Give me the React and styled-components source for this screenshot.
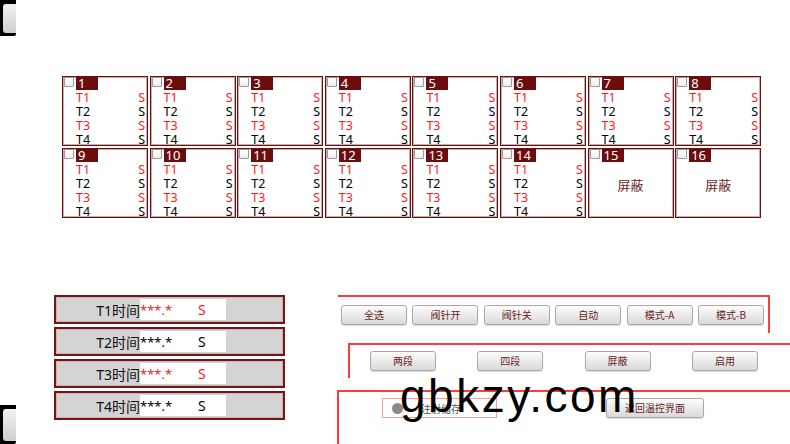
import React from 'react';
import styled, { createGlobalStyle } from 'styled-components';

const Global = createGlobalStyle`
  html, body { margin: 0; padding: 0; background: #fff; }
  body { font-family: "Noto Sans", "Noto Sans CJK SC", sans-serif; }
`;

const Page = styled.div`
  position: relative;
  width: 790px;
  height: 444px;
  overflow: hidden;
  background: #fff;
  display: flex;
  flex-direction: column;
`;

const Corner = styled.div`
  position: absolute;
  left: 0;
  top: ${(p) => p.$top}px;
  width: 16px;
  height: ${(p) => p.$h}px;
  background: #000;
  border-radius: 0 0 2px 0;
  &::after {
    content: '';
    position: absolute;
    left: 3px;
    top: 4px;
    right: 0;
    bottom: 3px;
    border-radius: 3px 0 0 3px;
    background: linear-gradient(#f2f2f2, #cfcfcf);
  }
`;

const Grid = styled.div`
  margin: 76px 0 0 62px;
  display: grid;
  grid-template-columns: repeat(8, 86px);
  grid-auto-rows: 70px;
  column-gap: 1.6px;
  row-gap: 2px;
`;

const Cell = styled.div`
  box-sizing: border-box;
  border: 1px solid #6a0e0e;
  box-shadow: inset 0 0 0 1px #d2aaaa;
  display: flex;
  flex-direction: column;
  padding: 0 1px 0 1px;
  font-size: 12.5px;
`;

const Head = styled.div`
  height: 13px;
  flex: none;
  display: flex;
  align-items: flex-start;
  gap: 2px;
`;

const Check = styled.span`
  box-sizing: border-box;
  width: 10px;
  height: 10px;
  border: 1px solid #9a9a9a;
  background: linear-gradient(#fff, #ececec);
  border-radius: 1px;
`;

const Tag = styled.span`
  box-sizing: border-box;
  width: 22px;
  height: 14px;
  margin-top: -1px;
  background: #6b0d0d;
  color: #fff;
  font-size: 13px;
  line-height: 15px;
  padding-left: 2px;
`;

const Row = styled.div`
  height: 14px;
  flex: none;
  line-height: 15px;
  display: flex;
  justify-content: space-between;
  padding: 0 1px 0 12px;
  color: ${(p) => (p.$red ? '#ff1a1a' : '#000')};
`;

const Shield = styled.div`
  flex: 1;
  display: flex;
  align-items: center;
  justify-content: center;
  padding-bottom: 10px;
  color: #6b2b2b;
  font-size: 13px;
`;

const Bottom = styled.div`
  margin-top: 77px;
  flex: 1;
  display: flex;
`;

const TimeCol = styled.div`
  margin-left: 54px;
  width: 231px;
  display: flex;
  flex-direction: column;
  gap: 3px;
`;

const TimePanel = styled.div`
  box-sizing: border-box;
  height: 29px;
  border: 2px solid #7a1414;
  box-shadow: inset 0 0 0 1px #c9b3b3;
  background: #d4d4d4;
  display: flex;
  align-items: center;
`;

const TimeLabel = styled.span`
  width: 84px;
  text-align: right;
  font-size: 14px;
  color: #111;
`;

const TimeBox = styled.span`
  width: 86px;
  height: 21px;
  background: #fff;
  display: flex;
  align-items: center;
  font-size: 14px;
  color: ${(p) => (p.$red ? '#ff1a1a' : '#000')};
`;

const Stars = styled.span`
  width: 58px;
  font-size: 13px;
`;

const Ctrl = styled.div`
  margin-left: 52px;
  flex: 1;
  display: flex;
  flex-direction: column;
`;

const Sec1 = styled.div`
  box-sizing: border-box;
  margin-left: 1px;
  width: 432px;
  height: 38px;
  border-top: 2px solid #ff3c3c;
  border-right: 2px solid #ff3c3c;
  padding: 8px 0 0 3px;
  display: flex;
  align-items: flex-start;
  gap: 5.4px;
`;

const Sec2 = styled.div`
  box-sizing: border-box;
  margin: 10px 0 0 11px;
  height: 35px;
  border-top: 2px solid #ff3c3c;
  border-left: 2px solid #ff3c3c;
  padding: 6px 0 0 20px;
  display: flex;
  align-items: flex-start;
  gap: 41.3px;
`;

const Sec3 = styled.div`
  box-sizing: border-box;
  margin-top: 12px;
  flex: 1;
  border-top: 2px solid #ff3c3c;
  border-left: 2px solid #ff3c3c;
  padding: 6px 0 0 43px;
  display: flex;
  align-items: flex-start;
`;

const Btn = styled.button`
  box-sizing: border-box;
  width: ${(p) => p.$w || 66}px;
  height: 20px;
  margin-left: ${(p) => p.$ml || 0}px;
  padding: 0;
  border: 1px solid #a9a9a9;
  border-radius: 3px;
  background: linear-gradient(#fdfdfd, #d9d9d9);
  box-shadow: 0 1px 1px rgba(0, 0, 0, 0.15);
  font-family: "Noto Sans CJK SC", "Noto Sans", sans-serif;
  font-size: 10px;
  color: #6b1f1f;
  line-height: 18px;
`;

const Toggle = styled.div`
  box-sizing: border-box;
  width: 115px;
  height: 20px;
  border: 1px solid #ff9a9a;
  display: flex;
  align-items: center;
  padding-left: 9px;
  gap: 18px;
  font-size: 10px;
  color: #555;
  font-family: "Noto Sans CJK SC", sans-serif;
`;

const Dot = styled.span`
  width: 11px;
  height: 11px;
  border-radius: 50%;
  background: #8a8a8a;
`;

const Watermark = styled.div`
  position: absolute;
  left: 400px;
  top: 369px;
  font-family: "Liberation Sans", Arial, sans-serif;
  font-size: 46px;
  letter-spacing: 2.5px;
  color: #000;
  pointer-events: none;
`;

const cells = Array.from({ length: 16 }, (_, i) => i + 1);

export default function App() {
  return (
    <>
      <Global />
      <Page>
        <Corner $top={0} $h={36} />
        <Corner $top={405} $h={39} />
        <Grid>
          {cells.map((n) => (
            <Cell key={n}>
              <Head>
                <Check />
                <Tag>{n}</Tag>
              </Head>
              {n <= 14 ? (
                ['T1', 'T2', 'T3', 'T4'].map((t, i) => (
                  <Row key={t} $red={i % 2 === 0}>
                    <span>{t}</span>
                    <span>S</span>
                  </Row>
                ))
              ) : (
                <Shield>屏蔽</Shield>
              )}
            </Cell>
          ))}
        </Grid>
        <Bottom>
          <TimeCol>
            {['T1', 'T2', 'T3', 'T4'].map((t, i) => (
              <TimePanel key={t}>
                <TimeLabel>{t}时间</TimeLabel>
                <TimeBox $red={i % 2 === 0}>
                  <Stars>***.*</Stars>
                  <span>S</span>
                </TimeBox>
              </TimePanel>
            ))}
          </TimeCol>
          <Ctrl>
            <Sec1>
              {['全选', '阀针开', '阀针关', '自动', '模式-A', '模式-B'].map((b) => (
                <Btn key={b}>{b}</Btn>
              ))}
            </Sec1>
            <Sec2>
              {['两段', '四段', '屏蔽', '启用'].map((b) => (
                <Btn key={b}>{b}</Btn>
              ))}
            </Sec2>
            <Sec3>
              <Toggle>
                <Dot />
                <span>注射储存</span>
              </Toggle>
              <Btn $w={98} $ml={109}>返回温控界面</Btn>
            </Sec3>
          </Ctrl>
        </Bottom>
        <Watermark>gbkzy.com</Watermark>
      </Page>
    </>
  );
}
